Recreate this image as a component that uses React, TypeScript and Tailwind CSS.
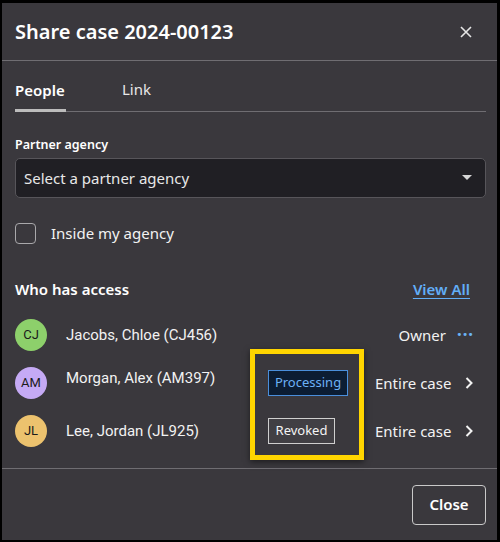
import React from "react";

const plex = { fontFamily: '"Noto Sans", "Open Sans", sans-serif' };

function Avatar({ initials, bg }: { initials: string; bg: string }) {
  return (
    <div
      className={`w-[32px] h-[32px] rounded-full flex items-center justify-center text-[13px] text-[#1b1b1b] shrink-0 ${bg}`}
      style={{ fontFamily: "Roboto, sans-serif" }}
    >
      {initials}
    </div>
  );
}

function Chevron() {
  return (
    <svg width="10" height="14" viewBox="0 0 10 14" className="shrink-0">
      <path d="M2.5 2 L7.5 7 L2.5 12" fill="none" stroke="#f2f2f2" strokeWidth="2" />
    </svg>
  );
}

export default function App() {
  return (
    <div className="w-[500px] h-[542px] bg-black pt-[3px] pl-[2px] pr-[3px] pb-[2px]" style={plex}>
      <div className="w-full h-full bg-[#3a383d] flex flex-col text-[#f4f4f4]">
        {/* Header */}
        <div className="h-[58px] flex items-center justify-between pl-[13px] pr-[24px] border-b border-[#6f6d72]">
          <div className="text-[20px] font-semibold text-white">Share case 2024-00123</div>
          <svg width="14" height="14" viewBox="0 0 14 14">
            <path d="M2 2 L12 12 M12 2 L2 12" stroke="#e6e6e6" strokeWidth="1.6" />
          </svg>
        </div>

        <div className="flex flex-col pl-[13px] pr-[11px] flex-1">
          {/* Tabs */}
          <div className="h-[51px] flex items-end border-b border-[#6f6d72]">
            <div className="flex flex-col items-start mr-[56px]">
              <div className="text-[15px] font-semibold text-white pb-[8px]">People</div>
              <div className="h-[3px] w-[51px] bg-[#bcbcbc] -mb-[1px]"></div>
            </div>
            <div className="text-[15px] text-[#e8e8e8] pb-[11px]">Link</div>
          </div>

          {/* Partner agency */}
          <div className="mt-[25px] text-[12.5px] font-semibold text-white leading-[16px]">Partner agency</div>
          <div className="mt-[5px] h-[40px] rounded-[5px] border border-[#57555a] bg-[#201f24] flex items-center justify-between pl-[8px] pr-[13px]">
            <span className="text-[15px] text-[#e8e8e8]">Select a partner agency</span>
            <svg width="10" height="6" viewBox="0 0 10 6">
              <path d="M0 0 L10 0 L5 5 Z" fill="#d6d6d6" />
            </svg>
          </div>

          {/* Checkbox */}
          <div className="mt-[24px] flex items-center">
            <div className="w-[21px] h-[21px] rounded-[4px] border-[1.5px] border-[#a9a8ab]"></div>
            <span className="ml-[15px] text-[15px] text-[#f2f2f2]">Inside my agency</span>
          </div>

          {/* Who has access */}
          <div className="mt-[33px] flex items-center justify-between pr-[16px]">
            <span className="text-[15px] font-semibold text-white">Who has access</span>
            <span className="text-[15px] font-semibold text-[#62aef7] underline underline-offset-[3px]">View All</span>
          </div>

          {/* Rows */}
          <div className="relative mt-[11px] flex flex-col" style={{ fontFamily: "Roboto, sans-serif" }}>
            <div className="h-[48px] flex items-center">
              <Avatar initials="CJ" bg="bg-[#8dd06b]" />
              <span className="ml-[19px] text-[15px] text-[#f2f2f2] flex-1">Jacobs, Chloe (CJ456)</span>
              <span className="text-[15px] text-[#f2f2f2]" style={plex}>Owner</span>
              <span className="ml-[11px] mr-[12px] text-[#6ab2f6] text-[13px] font-bold tracking-[1px] leading-none -mt-[2px]">•••</span>
            </div>
            <div className="h-[48px] flex items-center">
              <Avatar initials="AM" bg="bg-[#c5aaf5]" />
              <span className="ml-[19px] text-[15px] text-[#f2f2f2] w-[202px] -mt-[10px]">Morgan, Alex (AM397)</span>
              <span
                className="w-[80px] h-[26px] border border-[#4a8fdc] bg-[#0c1d33] text-[#6cb1f6] text-[13px] flex items-center justify-center"
                style={plex}
              >
                Processing
              </span>
              <span className="ml-[27px] text-[15px] text-[#f2f2f2] flex-1" style={plex}>Entire case</span>
              <span className="mr-[12px]"><Chevron /></span>
            </div>
            <div className="h-[48px] flex items-center">
              <Avatar initials="JL" bg="bg-[#ecc26e]" />
              <span className="ml-[19px] text-[15px] text-[#f2f2f2] w-[202px]">Lee, Jordan (JL925)</span>
              <span
                className="w-[67px] h-[26px] border border-[#cfcfcf] bg-[#413f44] text-[#f4f4f4] text-[13px] flex items-center justify-center"
                style={plex}
              >
                Revoked
              </span>
              <span className="ml-[40px] text-[15px] text-[#f2f2f2] flex-1" style={plex}>Entire case</span>
              <span className="mr-[12px]"><Chevron /></span>
            </div>
            {/* highlight annotation */}
            <div className="absolute left-[235px] top-[38px] w-[114px] h-[111px] border-[5px] border-[#ffd500] shadow-[0_2px_6px_rgba(0,0,0,0.5)] pointer-events-none"></div>
          </div>
        </div>

        {/* Footer */}
        <div className="mt-auto border-t border-[#6f6d72] h-[72px] flex items-center justify-end pr-[11px]">
          <button className="w-[74px] h-[40px] rounded-[4px] border border-[#c9c9c9] text-[15px] font-semibold text-white">
            Close
          </button>
        </div>
      </div>
    </div>
  );
}
